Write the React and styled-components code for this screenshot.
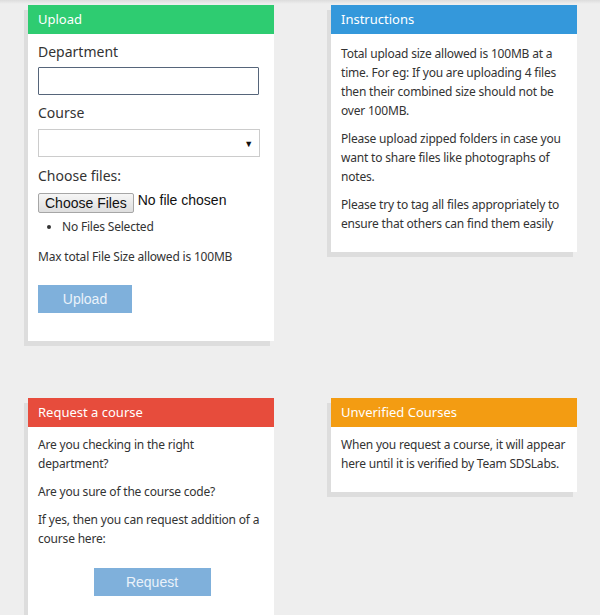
import React from 'react';
import styled, { createGlobalStyle } from 'styled-components';

const GlobalStyle = createGlobalStyle`
  html, body {
    margin: 0;
    padding: 0;
    background: #eeeeee;
  }
  body {
    font-family: "Noto Sans", "Open Sans", sans-serif;
    color: #333;
  }
`;

const Page = styled.div`
  min-height: 615px;
  background: linear-gradient(#dcdcdc, #eeeeee 4px);
  padding: 5px 0 0 28px;
  box-sizing: border-box;
  display: grid;
  grid-template-columns: 246px 246px;
  column-gap: 57px;
  row-gap: 57px;
  align-items: start;
`;

const Card = styled.section`
  background: #fff;
  box-shadow: -4px 5px 0 #dddddd;
`;

const Header = styled.div`
  background: ${(p) => p.color};
  color: #fff;
  height: 29px;
  line-height: 29px;
  padding: 0 10px;
  font-size: 13px;
`;

const Body = styled.div`
  padding: ${(p) => p.padding || '10px 8px 10px 10px'};
  font-size: 12px;
  line-height: 19px;
  letter-spacing: -0.2px;
  text-align: ${(p) => p.align || 'left'};
`;

const Para = styled.p`
  margin: 0 0 9px;
`;

const Label = styled.div`
  font-size: 14px;
  line-height: 20px;
  letter-spacing: 0;
  margin: ${(p) => p.margin || '0'};
`;

const TextInput = styled.input`
  display: block;
  box-sizing: border-box;
  width: 221px;
  height: 28px;
  margin: 5px 0 0;
  border: 1px solid #56657a;
  border-radius: 1px;
  padding: 0 6px;
  font: inherit;
  outline: none;
`;

const SelectBox = styled.div`
  box-sizing: border-box;
  width: 222px;
  height: 28px;
  margin: 6px 0 0;
  border: 1px solid #cccccc;
  display: flex;
  align-items: center;
  justify-content: flex-end;
  padding-right: 6px;
  font-size: 9px;
  color: #111;
`;

const FileRow = styled.div`
  display: flex;
  align-items: flex-start;
  margin-top: 7px;
  font-family: "Liberation Sans", Arial, sans-serif;
  letter-spacing: 0;
`;

const FileButton = styled.button`
  box-sizing: border-box;
  height: 20px;
  padding: 0 6px;
  font-family: "Liberation Sans", Arial, sans-serif;
  font-size: 14px;
  color: #111;
  background: linear-gradient(#f6f6f6, #dedede);
  border: 1px solid #a6a6a6;
  border-radius: 2px;
`;

const FileStatus = styled.span`
  margin-left: 4px;
  font-size: 14px;
  line-height: 14px;
  color: #111;
`;

const FileList = styled.ul`
  margin: 5px 0 0;
  padding-left: 24px;
  font-size: 12px;
  line-height: 18px;
`;

const Note = styled.div`
  font-size: 12px;
  margin-top: 11px;
`;

const ActionButton = styled.button`
  display: inline-block;
  box-sizing: border-box;
  width: ${(p) => p.width}px;
  height: 28px;
  margin: ${(p) => p.margin || '0'};
  background: #7fb0db;
  border: none;
  color: #eaf2fa;
  font-family: "Liberation Sans", Arial, sans-serif;
  font-size: 14px;
  letter-spacing: 0;
`;

export default function App() {
  return (
    <>
      <GlobalStyle />
      <Page>
        <Card>
          <Header color="#2ecc71">Upload</Header>
          <Body padding="8px 10px 28px">
            <Label>Department</Label>
            <TextInput type="text" />
            <Label margin="8px 0 0">Course</Label>
            <SelectBox>▼</SelectBox>
            <Label margin="9px 0 0">Choose files:</Label>
            <FileRow>
              <FileButton>Choose Files</FileButton>
              <FileStatus>No file chosen</FileStatus>
            </FileRow>
            <FileList>
              <li>No Files Selected</li>
            </FileList>
            <Note>Max total File Size allowed is 100MB</Note>
            <ActionButton width={94} margin="19px 0 0">
              Upload
            </ActionButton>
          </Body>
        </Card>

        <Card>
          <Header color="#3498db">Instructions</Header>
          <Body>
            <Para>
              Total upload size allowed is 100MB at a time. For eg: If you are uploading 4
              files then their combined size should not be over 100MB.
            </Para>
            <Para>
              Please upload zipped folders in case you want to share files like photographs of
              notes.
            </Para>
            <Para>
              Please try to tag all files appropriately to ensure that others can find them
              easily
            </Para>
          </Body>
        </Card>

        <Card>
          <Header color="#e74c3c">Request a course</Header>
          <Body padding="8px 8px 28px 10px">
            <Para>Are you checking in the right department?</Para>
            <Para>Are you sure of the course code?</Para>
            <Para>If yes, then you can request addition of a course here:</Para>
            <Body padding="11px 0 0" align="center">
              <ActionButton width={117}>Request</ActionButton>
            </Body>
          </Body>
        </Card>

        <Card>
          <Header color="#f39c12">Unverified Courses</Header>
          <Body padding="8px 8px 10px 10px">
            <Para>
              When you request a course, it will appear here until it is verified by Team
              SDSLabs.
            </Para>
          </Body>
        </Card>
      </Page>
    </>
  );
}
